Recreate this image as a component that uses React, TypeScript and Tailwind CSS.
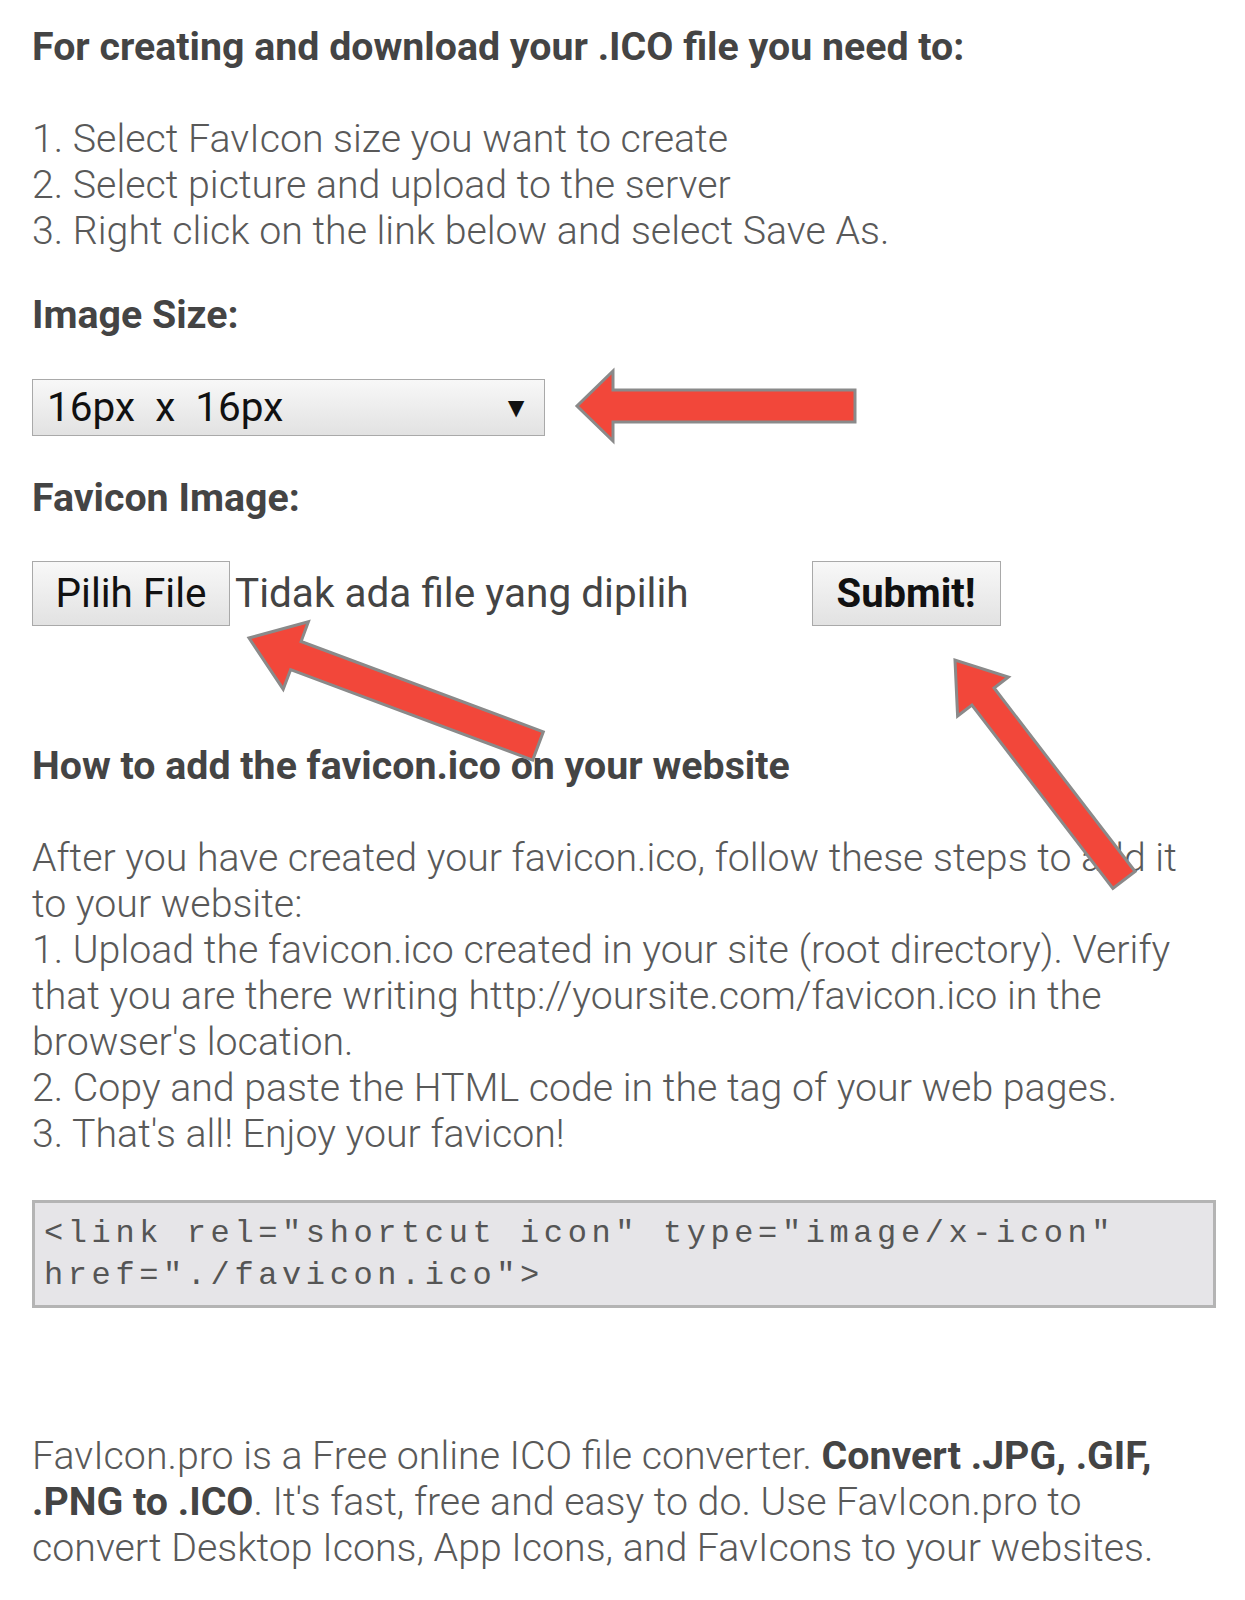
import React from "react";

type Pt = [number, number];

function arrowPoints(tail: Pt, tip: Pt, shaft: number, headW: number, headL: number): string {
  const dx = tip[0] - tail[0];
  const dy = tip[1] - tail[1];
  const len = Math.hypot(dx, dy);
  const ux = dx / len;
  const uy = dy / len;
  const px = -uy;
  const py = ux;
  const bx = tip[0] - ux * headL;
  const by = tip[1] - uy * headL;
  const pts: Pt[] = [
    [tail[0] + px * shaft / 2, tail[1] + py * shaft / 2],
    [bx + px * shaft / 2, by + py * shaft / 2],
    [bx + px * headW / 2, by + py * headW / 2],
    [tip[0], tip[1]],
    [bx - px * headW / 2, by - py * headW / 2],
    [bx - px * shaft / 2, by - py * shaft / 2],
    [tail[0] - px * shaft / 2, tail[1] - py * shaft / 2],
  ];
  return pts.map((p) => `${p[0].toFixed(1)},${p[1].toFixed(1)}`).join(" ");
}

const Arrow = ({ tail, tip, shaft, headW, headL }: { tail: Pt; tip: Pt; shaft: number; headW: number; headL: number }) => (
  <polygon
    points={arrowPoints(tail, tip, shaft, headW, headL)}
    fill="#f2473a"
    stroke="#8a8a8a"
    strokeWidth={3}
    strokeLinejoin="miter"
  />
);

export default function App() {
  const body = "font-light text-[#595959] text-[39.3px] leading-[46px]";
  const heading = "font-bold text-[#444] text-[39.3px] leading-[46px]";
  const btn = "border border-[#a9a9a9] bg-gradient-to-b from-[#f8f8f8] to-[#e2e2e2]";
  return (
    <div
      className="relative w-[1245px] h-[1600px] bg-white overflow-hidden"
      style={{ fontFamily: "Roboto, 'Noto Sans', sans-serif" }}
    >
      <div className="px-[32px] pt-[24px] flex flex-col">
        <h1 className={heading}>For creating and download your .ICO file you need to:</h1>
        <div className={`${body} mt-[46px]`}>
          <div>1. Select FavIcon size you want to create</div>
          <div>2. Select picture and upload to the server</div>
          <div>3. Right click on the link below and select Save As.</div>
        </div>
        <h2 className={`${heading} mt-[38px]`}>Image Size:</h2>
        <div className={`mt-[41px] w-[513px] h-[57px] ${btn} flex items-center justify-between pl-[14px] pr-[14px]`}>
          <span className="text-[40.5px] text-[#111] whitespace-pre">16px  x  16px</span>
          <span className="text-[28px] text-[#111]">▼</span>
        </div>
        <h2 className={`${heading} mt-[39px]`}>Favicon Image:</h2>
        <div className="mt-[40px] flex items-center h-[65px]">
          <div className={`w-[198px] h-[65px] ${btn} flex items-center justify-center text-[40.5px] text-[#111]`}>
            Pilih File
          </div>
          <span className="ml-[5px] text-[40.5px] text-[#444]">Tidak ada file yang dipilih</span>
          <div className={`ml-[123px] w-[189px] h-[65px] ${btn} flex items-center justify-center text-[40px] font-bold text-[#111]`}>
            Submit!
          </div>
        </div>
        <h2 className={`${heading} mt-[117px]`}>How to add the favicon.ico on your website</h2>
        <div className={`${body} mt-[46px] whitespace-nowrap`}>
          <div>After you have created your favicon.ico, follow these steps to add it</div>
          <div>to your website:</div>
          <div>1. Upload the favicon.ico created in your site (root directory). Verify</div>
          <div>that you are there writing http://yoursite.com/favicon.ico in the</div>
          <div>browser's location.</div>
          <div>2. Copy and paste the HTML code in the tag of your web pages.</div>
          <div>3. That's all! Enjoy your favicon!</div>
        </div>
        <div
          className="mt-[43px] w-[1184px] h-[108px] border-[3px] border-[#b4b4b4] bg-[#e6e5e8] px-[9px] pt-[10px] text-[32px] leading-[42px] text-[#555] tracking-[4.6px] whitespace-pre"
          style={{ fontFamily: "'Liberation Mono', 'DejaVu Sans Mono', monospace" }}
        >
          <div>{'<link rel="shortcut icon" type="image/x-icon"'}</div>
          <div>{'href="./favicon.ico">'}</div>
        </div>
        <div className={`${body} mt-[125px] whitespace-nowrap`}>
          <div>
            FavIcon.pro is a Free online ICO file converter. <span className="font-bold text-[#444]">Convert .JPG, .GIF,</span>
          </div>
          <div>
            <span className="font-bold text-[#444]">.PNG to .ICO</span>. It's fast, free and easy to do. Use FavIcon.pro to
          </div>
          <div>convert Desktop Icons, App Icons, and FavIcons to your websites.</div>
        </div>
      </div>
      <svg className="absolute left-0 top-0 pointer-events-none" width={1245} height={1600} viewBox="0 0 1245 1600">
        <Arrow tail={[855, 406]} tip={[577, 406]} shaft={32} headW={70} headL={36} />
        <Arrow tail={[538, 746]} tip={[249, 638]} shaft={30} headW={72} headL={50} />
        <Arrow tail={[1124, 880]} tip={[955, 660]} shaft={28} headW={64} headL={46} />
      </svg>
    </div>
  );
}
